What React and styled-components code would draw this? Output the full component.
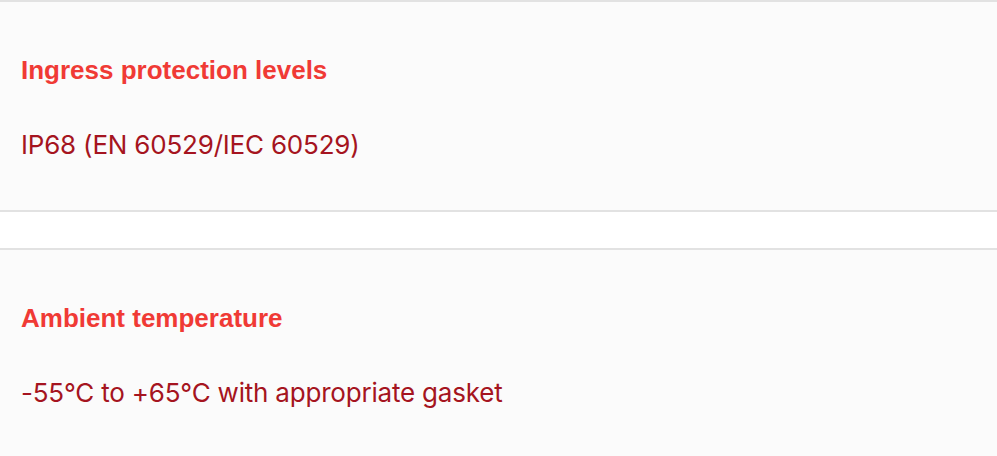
import React from "react";
import styled, { createGlobalStyle } from "styled-components";

const Global = createGlobalStyle`
  html, body { margin: 0; padding: 0; background: #ffffff; }
  body { font-family: "Liberation Sans", Arial, sans-serif; }
`;

const List = styled.div`
  display: flex;
  flex-direction: column;
  gap: 36px;
`;

const Card = styled.section`
  background: #fbfbfb;
  border-top: 2px solid #e2e2e2;
  border-bottom: 2px solid #e2e2e2;
  padding: 53px 21px 47px;
  display: flex;
  flex-direction: column;
  gap: 42px;
`;

const Title = styled.h3`
  margin: 0;
  font-family: "Liberation Sans", Arial, sans-serif;
  font-weight: 700;
  font-size: 26px;
  line-height: 30px;
  color: #f03a35;
`;

const Value = styled.p`
  margin: 0;
  font-family: "Inter", sans-serif;
  font-weight: 400;
  font-size: 26px;
  line-height: 36px;
  letter-spacing: -0.2px;
  color: #a51420;
`;

const specs = [
  { title: "Ingress protection levels", value: "IP68 (EN 60529/IEC 60529)" },
  { title: "Ambient temperature", value: "-55°C to +65°C with appropriate gasket" },
];

export default function App() {
  return (
    <>
      <Global />
      <List>
        {specs.map((s) => (
          <Card key={s.title}>
            <Title>{s.title}</Title>
            <Value>{s.value}</Value>
          </Card>
        ))}
      </List>
    </>
  );
}
